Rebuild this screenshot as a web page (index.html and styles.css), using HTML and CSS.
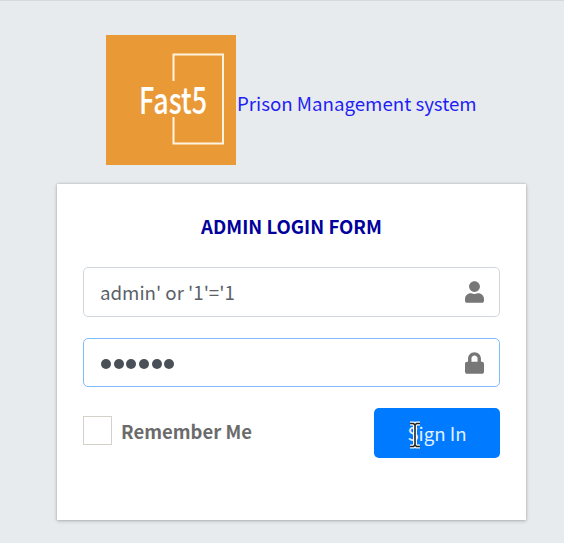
FILE: index.html
```html
<!DOCTYPE html>
<html lang="en">
<head>
<meta charset="utf-8">
<title>Prison Management system</title>
<link rel="stylesheet" href="styles.css">
</head>
<body>
<main class="login-box">
  <a class="brand">
    <svg class="logo" viewBox="0 0 130 130" aria-label="Fast5">
      <rect width="130" height="130" fill="#e99a37"/>
      <path d="M67.500 46V19.500H117V108.500H67.500V82" fill="none" stroke="#fff3df" stroke-width="2"/>
      <text class="logo-text" x="33" y="79" textLength="68" lengthAdjust="spacingAndGlyphs">Fast5</text>
    </svg>
    <span class="brand-name">Prison Management system</span>
  </a>
  <form class="card">
    <h1 class="title">ADMIN LOGIN FORM</h1>
    <div class="field">
      <span class="value">admin' or '1'='1</span>
      <svg class="icon" viewBox="0 0 448 512"><path d="M224 256c70.700 0 128-57.300 128-128S294.700 0 224 0 96 57.300 96 128s57.300 128 128 128zm89.600 32h-16.700c-22.200 10.200-46.900 16-72.900 16s-50.600-5.800-72.900-16h-16.700C60.200 288 0 348.200 0 422.400V464c0 26.500 21.500 48 48 48h352c26.500 0 48-21.500 48-48v-41.600c0-74.200-60.200-134.400-134.400-134.400z"/></svg>
    </div>
    <div class="field focused">
      <span class="dots"><i></i><i></i><i></i><i></i><i></i><i></i></span>
      <svg class="icon" viewBox="0 0 448 512"><path d="M400 224h-24v-72C376 68.200 307.800 0 224 0S72 68.200 72 152v72H48c-26.500 0-48 21.500-48 48v192c0 26.500 21.500 48 48 48h352c26.500 0 48-21.500 48-48V272c0-26.500-21.500-48-48-48zm-104 0H152v-72c0-39.700 32.300-72 72-72s72 32.300 72 72v72z"/></svg>
    </div>
    <div class="actions">
      <label class="remember"><span class="check"></span><span>Remember Me</span></label>
      <button class="submit" type="button"><span>Sign In</span>
        <svg class="cursor" viewBox="0 0 12 28"><path d="M1 2.500H4.500L6 4L7.500 2.500H11M6 4V24M1 25.500H4.500L6 24L7.500 25.500H11" fill="none" stroke="#fff" stroke-width="4"/><path d="M1 2.500H4.500L6 4L7.500 2.500H11M6 4V24M1 25.500H4.500L6 24L7.500 25.500H11" fill="none" stroke="#222" stroke-width="1.600"/></svg>
      </button>
    </div>
  </form>
</main>
</body>
</html>
```
FILE: styles.css
```css
* { box-sizing: border-box; }
body {
  margin: 0;
  height: 543px;
  overflow: hidden;
  background: #e8ebee;
  border-top: 1px solid #d6dadd;
  font-family: "Noto Sans CJK SC", "Open Sans", sans-serif;
  font-size: 18.650px;
  line-height: 28px;
}
.login-box { width: 469px; margin: 34px 0 0 57px; }
.brand { display: flex; align-items: center; margin-left: 49px; height: 130px; color: #1f1ff5; }
.logo { width: 130px; height: 130px; flex: none; }
.logo-text { font-family: "Noto Sans CJK SC", sans-serif; font-size: 37px; font-weight: 500; fill: #fff; }
.brand-name { font-size: 18.700px; white-space: nowrap; margin: 5px 0 0 1px; }
.card {
  height: 336.500px;
  margin-top: 18.500px;
  padding: 28.500px 26px 0;
  background: #fff;
  box-shadow: 0 0 2px rgba(0,0,0,.18), 0 1px 4px rgba(0,0,0,.22);
}
.title { margin: 0 0 27px; font-size: 18.600px; line-height: 28px; font-weight: 700; text-align: center; color: #00009c; }
.field {
  display: flex;
  align-items: center;
  justify-content: space-between;
  height: 49.500px;
  margin-bottom: 21px;
  padding: 0 15.500px 0 16px;
  border: 1.500px solid #d1d6dc;
  border-radius: 5px;
  color: #5b6168;
}
.focused { border-color: #80bdff; }
.value { font-size: 18.700px; }
.icon { width: 19px; height: 22px; margin-top: 1px; fill: #777; }
.dots { display: flex; gap: 2.700px; padding: 3px 0 0 1px; }
.dots i { width: 10px; height: 10px; border-radius: 50%; background: #495057; }
.actions { display: flex; justify-content: space-between; align-items: flex-start; }
.remember { display: flex; align-items: center; gap: 9px; height: 45px; font-size: 18.500px; font-weight: 700; color: #6b6b6b; }
.check { width: 29px; height: 29px; border: 1px solid #d5d2c9; }
.submit {
  position: relative;
  width: 126px;
  height: 50px;
  padding: 0 0 1px;
  border: 0;
  border-radius: 5px;
  background: #007bff;
  color: #e3f0ff;
  font: inherit;
}
.cursor { position: absolute; left: 35px; top: 13px; width: 12px; height: 28px; }
```
